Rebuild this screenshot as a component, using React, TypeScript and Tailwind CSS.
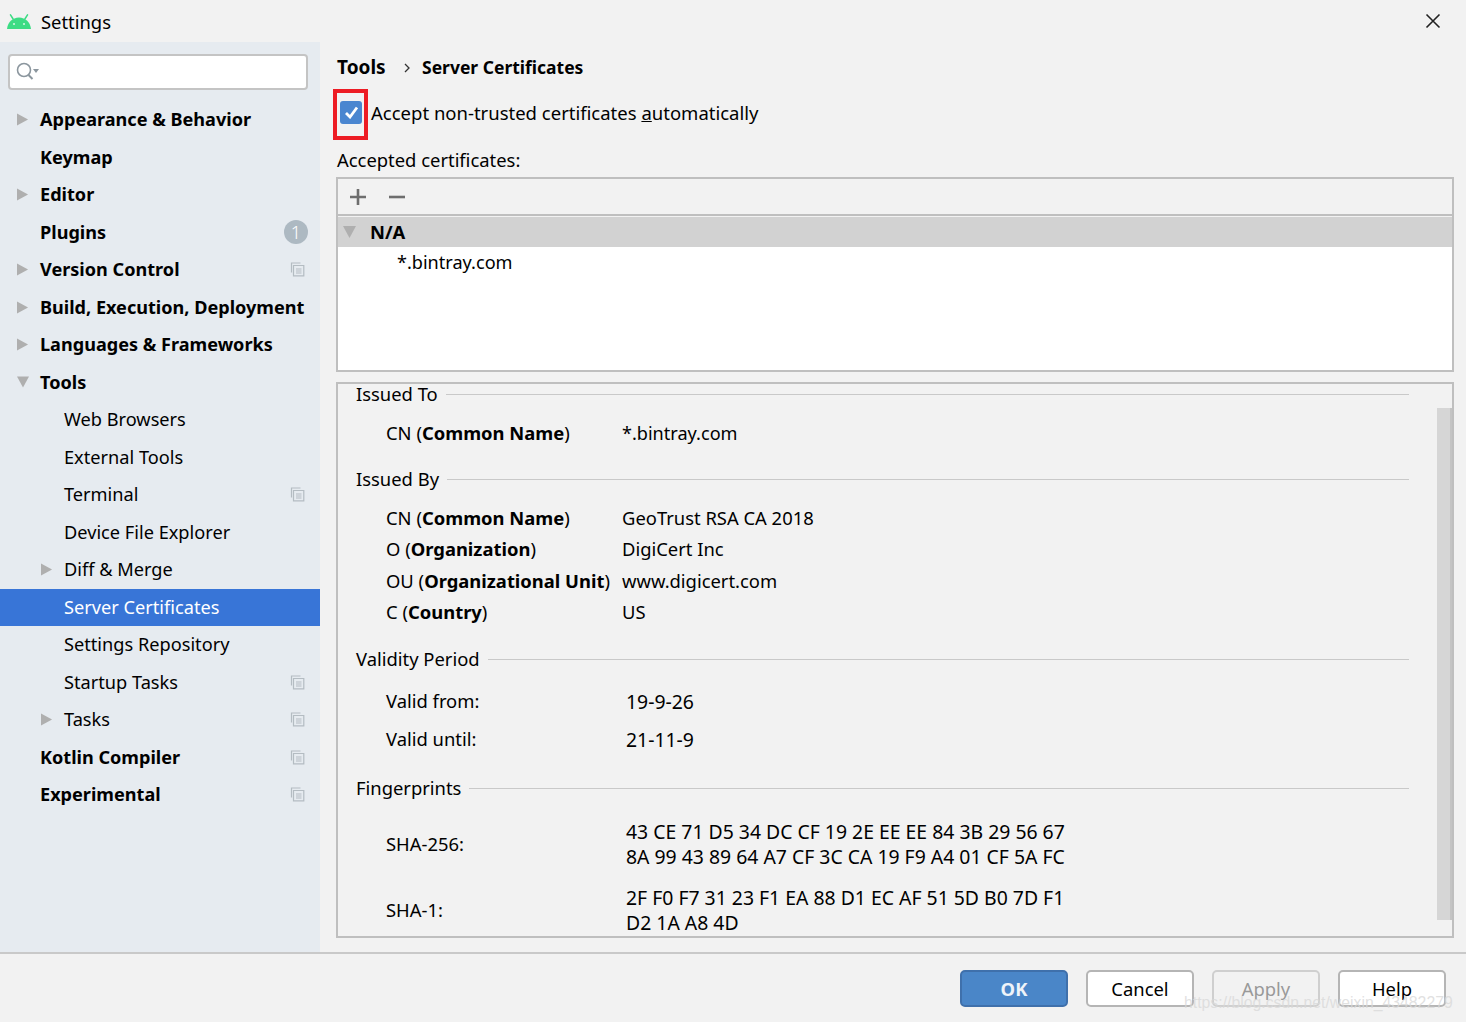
type Row = {
  label: string;
  bold?: boolean;
  arrow?: string;
  badge?: boolean;
  copy?: boolean;
  selected?: boolean;
};

const treeRows: Row[] = [
  { label: "Appearance & Behavior", bold: true, arrow: "right" },
  { label: "Keymap", bold: true },
  { label: "Editor", bold: true, arrow: "right" },
  { label: "Plugins", bold: true, badge: true },
  { label: "Version Control", bold: true, arrow: "right", copy: true },
  { label: "Build, Execution, Deployment", bold: true, arrow: "right" },
  { label: "Languages & Frameworks", bold: true, arrow: "right" },
  { label: "Tools", bold: true, arrow: "down" },
  { label: "Web Browsers" },
  { label: "External Tools" },
  { label: "Terminal", copy: true },
  { label: "Device File Explorer" },
  { label: "Diff & Merge", arrow: "right" },
  { label: "Server Certificates", selected: true },
  { label: "Settings Repository" },
  { label: "Startup Tasks", copy: true },
  { label: "Tasks", arrow: "right", copy: true },
  { label: "Kotlin Compiler", bold: true, copy: true },
  { label: "Experimental", bold: true, copy: true },
];

function AndroidLogo() {
  return (
    <svg width="24" height="15" viewBox="0 0 24 15">
      <path d="M0 15C.5 8.500 5.500 3.500 12 3.500S23.500 8.500 24 15Z" fill="#3ddc84" />
      <path d="M3.500.8l2.600 4.200M20.500.8l-2.600 4.200" stroke="#3ddc84" strokeWidth="1.500" strokeLinecap="round" />
      <circle cx="7" cy="10" r="1" fill="#d8f7e6" />
      <circle cx="17" cy="10" r="1" fill="#d8f7e6" />
    </svg>
  );
}

function Arrow({ dir }: { dir: string }) {
  return (
    <svg width="13" height="13" viewBox="0 0 13 13">
      {dir === "right" ? <path d="M0 0l12 6.500L0 13Z" fill="#afafaf" /> : <path d="M0 0h13L6.500 12Z" fill="#afafaf" />}
    </svg>
  );
}

function CopyIcon() {
  return (
    <svg width="15" height="15" viewBox="0 0 15 15" fill="none" stroke="#b4bcc2" strokeWidth="1.2">
      <path d="M10.500 1H1.500V10.500" />
      <path d="M3.500 3.500H13.800V13.800H3.500Z" fill="#e6ebf0" />
      <path d="M6 7h5.500M6 9h5.500M6 11h5.500" />
    </svg>
  );
}

function TreeRow({ row }: { row: Row }) {
  const nested = !row.bold;
  return (
    <div className={`relative flex h-[37.5px] items-center ${row.selected ? "bg-[#3875d7] text-white" : "text-black"}`}>
      {row.arrow && (
        <span className={`flex w-3 ${nested ? "ml-[41px]" : "ml-[17px]"}`}>
          <Arrow dir={row.arrow} />
        </span>
      )}
      <span
        className={`whitespace-nowrap ${row.bold ? "text-[18.1px] font-bold" : "text-[18.2px]"} ${
          row.arrow ? "ml-[11px]" : nested ? "ml-16" : "ml-10"
        }`}
      >
        {row.label}
      </span>
      {row.copy && (
        <span className="ml-auto mr-[15px] flex">
          <CopyIcon />
        </span>
      )}
      {row.badge && (
        <span className="ml-auto mr-3 flex h-6 w-6 items-center justify-center rounded-full bg-[#adb9c2] text-[18px] font-light text-white">
          1
        </span>
      )}
    </div>
  );
}

function SectionTitle({ title, className }: { title: string; className: string }) {
  return (
    <div className={`flex h-6 items-center pl-[18px] pr-[43px] ${className}`}>
      <span className="mr-2 whitespace-nowrap">{title}</span>
      <span className="h-px flex-1 bg-[#c9c9c9]" />
    </div>
  );
}

function NameRow({ name, strong, value }: { name: string; strong: string; value: string }) {
  return (
    <div className="flex h-[31.5px] items-center pl-12">
      <span className="w-[236px] whitespace-nowrap">
        {name} (<b>{strong}</b>)
      </span>
      <span>{value}</span>
    </div>
  );
}

function ValueRow({ name, lines, height }: { name: string; lines: string[]; height: string }) {
  return (
    <div className={`flex items-center pl-12 ${height}`}>
      <span className="w-[240px] whitespace-nowrap">{name}</span>
      <div className="flex flex-col text-[19.4px]">
        {lines.map((line) => (
          <span key={line} className="h-[25px] leading-[25px] whitespace-nowrap">
            {line}
          </span>
        ))}
      </div>
    </div>
  );
}

function FooterButton({ label, kind }: { label: string; kind?: string }) {
  const cls =
    kind === "primary"
      ? "border-[#3f70ab] bg-[#4a86c8] font-bold text-[#eef3f9]"
      : kind === "disabled"
        ? "border-[#cfcfcf] bg-[#f2f2f2] text-[#999]"
        : "border-[#b5b5b5] bg-white text-black";
  return <button className={`h-[37px] w-[108px] rounded-[5px] border-2 ${cls}`}>{label}</button>;
}

export default function App() {
  return (
    <div className="relative flex h-[1022px] w-[1466px] flex-col overflow-hidden bg-[#f2f2f2] font-['Noto_Sans','Open_Sans',sans-serif] text-[18.4px] text-black">
      <div className="flex h-[42px] items-center pl-[7px] pr-[25px]">
        <AndroidLogo />
        <span className="ml-[10px] pt-[2px]">Settings</span>
        <svg className="ml-auto" width="16" height="16" viewBox="0 0 16 16" stroke="#222" strokeWidth="1.6">
          <path d="M1.500 1.500l13 13M14.500 1.500l-13 13" />
        </svg>
      </div>

      <div className="flex min-h-0 flex-1">
        <div className="w-80 shrink-0 bg-[#e6ebf0] pt-3">
          <div className="ml-2 mr-3 flex h-9 items-center rounded-[4px] border-2 border-[#c4c4c4] bg-white pl-[5px]">
            <svg width="26" height="22" viewBox="0 0 26 22" fill="none" stroke="#8b969e" strokeWidth="1.600">
              <circle cx="9" cy="9" r="6.500" />
              <path d="M13.500 14l4 4" strokeWidth="2" />
              <path d="M18 8h6l-3 4Z" fill="#8b969e" stroke="none" />
            </svg>
          </div>
          <div className="mt-[11px]">
            {treeRows.map((row) => (
              <TreeRow key={row.label} row={row} />
            ))}
          </div>
        </div>

        <div className="min-w-0 flex-1 pl-[17px] pr-[13px]">
          <div className="flex h-[51px] items-center font-bold">
            <span className="w-[66px] whitespace-nowrap text-[19px]">Tools</span>
            <svg className="mr-[11px]" width="8" height="12" viewBox="0 0 8 12" fill="none" stroke="#333" strokeWidth="1.300">
              <path d="M2 2l4 4-4 4" />
            </svg>
            <span className="text-[17.5px]">Server Certificates</span>
          </div>

          <div className="flex h-10 items-center pl-[3px]">
            <span className="-mt-px flex h-[23px] w-[22px] items-center justify-center rounded-[3px] bg-[#4a86d0]">
              <svg width="15" height="13" viewBox="0 0 15 13" fill="none" stroke="white" strokeWidth="2.800">
                <path d="M2 7l4 4 7-9.500" />
              </svg>
            </span>
            <span className="ml-[9px] text-[18.5px]">
              Accept non-trusted certificates <u>a</u>utomatically
            </span>
          </div>

          <div className="mb-[4px] mt-[13px] flex h-[27px] items-center">Accepted certificates:</div>

          <div className="-mx-px flex h-[195px] flex-col border-2 border-[#bfbfbf]">
            <div className="flex h-[37px] shrink-0 items-center border-b-2 border-[#bfbfbf] pl-3">
              <svg width="16" height="16" viewBox="0 0 16 16" stroke="#6e6e6e" strokeWidth="2.600">
                <path d="M8 0v16M0 8h16" />
              </svg>
              <svg className="ml-[23px]" width="16" height="16" viewBox="0 0 16 16" stroke="#6e6e6e" strokeWidth="2.600">
                <path d="M0 8h16" />
              </svg>
            </div>
            <div className="mt-px flex h-[30px] shrink-0 items-center bg-[#d2d2d2] pl-[5px] font-bold">
              <Arrow dir="down" />
              <span className="ml-[14px]">N/A</span>
            </div>
            <div className="flex-1 bg-white pl-[59px] pt-[2px] text-[18.1px]">*.bintray.com</div>
          </div>

          <div className="relative -mx-px mt-[10px] h-[556px] border-2 border-[#bfbfbf]">
            <SectionTitle title="Issued To" className="-mt-[2px]" />
            <div className="flex h-[54px] items-center pl-12">
              <span className="w-[236px]">
                CN (<b>Common Name</b>)
              </span>
              <span className="pt-px text-[18.1px]">*.bintray.com</span>
            </div>
            <SectionTitle title="Issued By" className="mt-[7px]" />
            <div className="mt-[11px] flex flex-col">
              <NameRow name="CN" strong="Common Name" value="GeoTrust RSA CA 2018" />
              <NameRow name="O" strong="Organization" value="DigiCert Inc" />
              <NameRow name="OU" strong="Organizational Unit" value="www.digicert.com" />
              <NameRow name="C" strong="Country" value="US" />
            </div>
            <SectionTitle title="Validity Period" className="mt-[19px]" />
            <div className="mt-[11px]">
              <ValueRow name="Valid from:" lines={["19-9-26"]} height="h-[38px]" />
              <ValueRow name="Valid until:" lines={["21-11-9"]} height="h-[38px]" />
            </div>
            <SectionTitle title="Fingerprints" className="mt-[18px]" />
            <div className="mt-[11px]">
              <ValueRow
                name="SHA-256:"
                lines={["43 CE 71 D5 34 DC CF 19 2E EE EE 84 3B 29 56 67", "8A 99 43 89 64 A7 CF 3C CA 19 F9 A4 01 CF 5A FC"]}
                height="h-[66px]"
              />
              <ValueRow
                name="SHA-1:"
                lines={["2F F0 F7 31 23 F1 EA 88 D1 EC AF 51 5D B0 7D F1", "D2 1A A8 4D"]}
                height="mt-[8px] h-[50px]"
              />
            </div>
            <div className="absolute right-0 top-6 h-[512px] w-[15px] border-r-2 border-[#c4c4c4] bg-[#d6d6d6]" />
          </div>
        </div>
      </div>

      <div className="flex h-[70px] shrink-0 items-start justify-end gap-[18px] border-t-2 border-[#c9c9c9] pr-5 pt-4">
        <FooterButton label="OK" kind="primary" />
        <FooterButton label="Cancel" />
        <FooterButton label="Apply" kind="disabled" />
        <FooterButton label="Help" />
      </div>

      {/* red annotation and watermark sit on top of the screenshot */}
      <div className="absolute left-[333px] top-[89px] h-[51px] w-[35px] border-[4px] border-[#ed1c24]" />
      <div className="absolute left-[1184px] top-[992px] whitespace-nowrap font-['Liberation_Sans',sans-serif] text-[15.8px] leading-[22px] text-[#d9d9d9]/80">
        https://blog.csdn.net/weixin_43482279
      </div>
    </div>
  );
}
